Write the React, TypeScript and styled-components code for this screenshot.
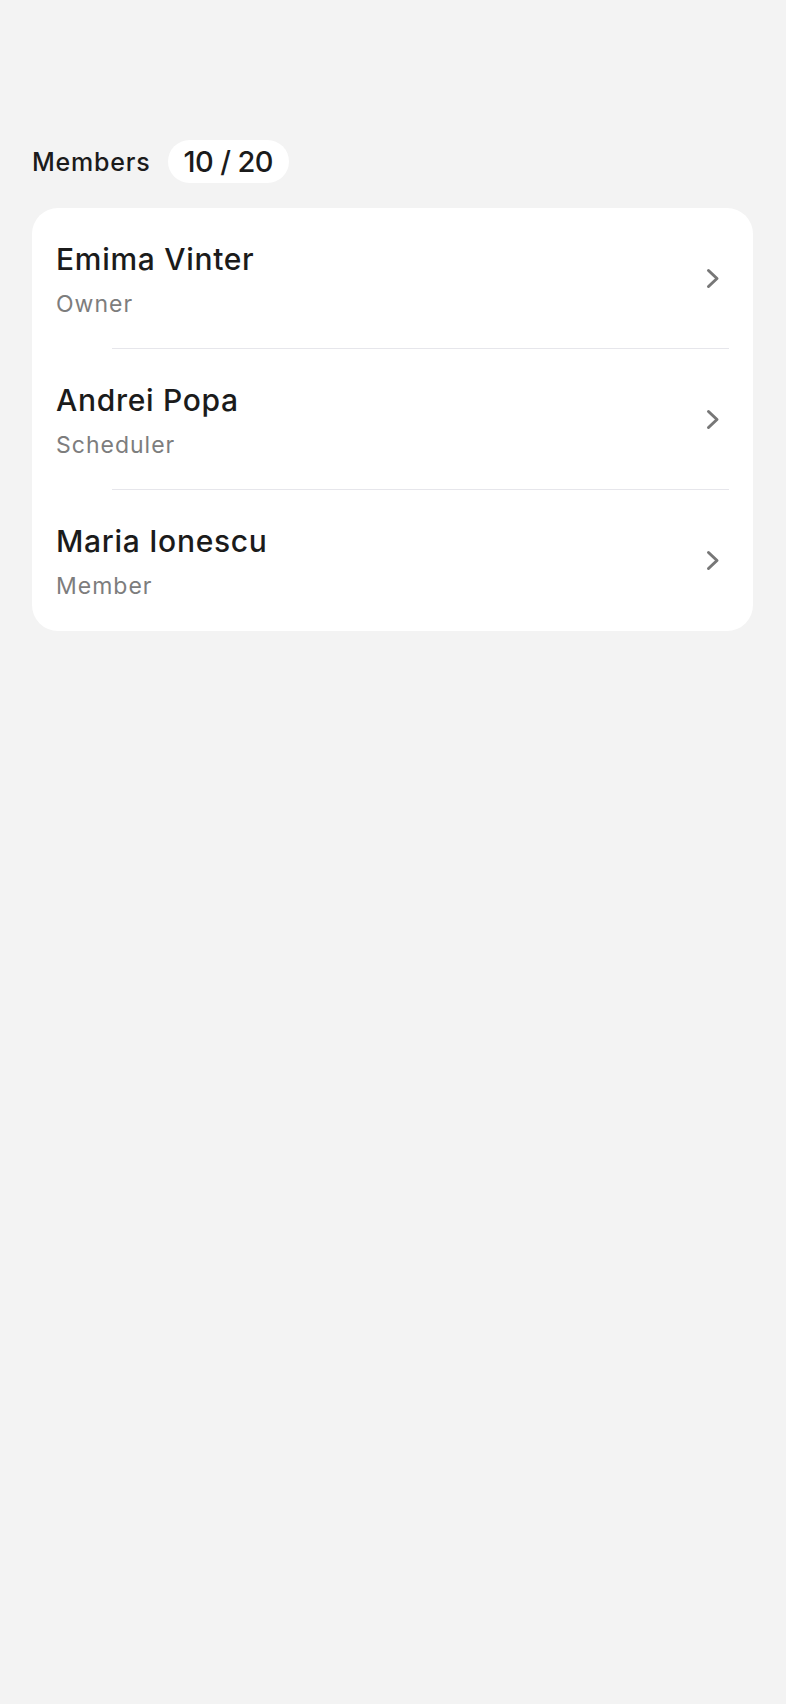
import React from 'react'
import styled, { createGlobalStyle } from 'styled-components'

const GlobalStyle = createGlobalStyle`
  html, body {
    margin: 0;
    padding: 0;
    background: #f3f3f3;
  }
  body {
    font-family: Inter, "Noto Sans", "Liberation Sans", sans-serif;
    color: #1b1b1b;
    -webkit-font-smoothing: antialiased;
  }
`

const Page = styled.div`
  min-height: 1704px;
  background: #f3f3f3;
  padding: 140px 33px 0 32px;
  box-sizing: border-box;
  display: flex;
  flex-direction: column;
  gap: 25px;
`

const Header = styled.div`
  display: flex;
  align-items: center;
  gap: 17px;
  height: 43px;
`

const Title = styled.div`
  font-size: 25px;
  font-weight: 500;
  letter-spacing: 0.8px;
`

const CountPill = styled.div`
  height: 43px;
  padding: 0 16px;
  display: flex;
  align-items: center;
  background: #ffffff;
  border-radius: 22px;
  font-size: 29px;
  font-weight: 500;
  letter-spacing: -0.6px;
`

const Card = styled.div`
  background: #ffffff;
  border-radius: 26px;
  overflow: hidden;
`

const Row = styled.div<{ $divider: boolean }>`
  position: relative;
  display: flex;
  align-items: center;
  height: 141px;
  padding: 0 33px 0 24px;
  box-sizing: border-box;
  &::after {
    content: '';
    display: ${(p) => (p.$divider ? 'block' : 'none')};
    position: absolute;
    left: 80px;
    right: 24px;
    bottom: 0;
    height: 1.5px;
    background: #e6e6eb;
  }
`

const Info = styled.div`
  flex: 1;
  display: flex;
  flex-direction: column;
  gap: 13px;
  padding-top: 1px;
`

const Name = styled.div`
  font-size: 30px;
  line-height: 36px;
  font-weight: 500;
  letter-spacing: 0.7px;
  color: #1b1b1b;
`

const Role = styled.div`
  font-size: 23px;
  line-height: 28px;
  font-weight: 400;
  letter-spacing: 1px;
  color: #7d7d7d;
`

const Chevron = () => (
  <svg width="14" height="21" viewBox="0 0 14 21" fill="none">
    <polyline
      points="2.5,2.5 11,10.5 2.5,18.5"
      stroke="#777777"
      strokeWidth="3"
      strokeLinecap="round"
      strokeLinejoin="round"
    />
  </svg>
)

const members = [
  { name: 'Emima Vinter', role: 'Owner' },
  { name: 'Andrei Popa', role: 'Scheduler' },
  { name: 'Maria Ionescu', role: 'Member' },
]

export default function App() {
  return (
    <>
      <GlobalStyle />
      <Page>
        <Header>
          <Title>Members</Title>
          <CountPill>10 / 20</CountPill>
        </Header>
        <Card>
          {members.map((m, i) => (
            <Row key={m.name} $divider={i < members.length - 1}>
              <Info>
                <Name>{m.name}</Name>
                <Role>{m.role}</Role>
              </Info>
              <Chevron />
            </Row>
          ))}
        </Card>
      </Page>
    </>
  )
}
